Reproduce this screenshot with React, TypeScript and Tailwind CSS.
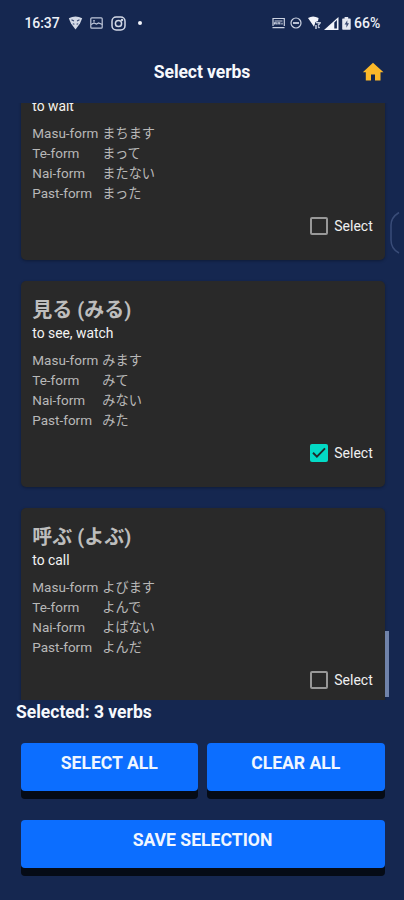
import React, { useState } from "react";

type Verb = {
  title?: string;
  meaning: string;
  forms: [string, string, string, string];
  selected: boolean;
};

const verbs: Verb[] = [
  { meaning: "to wait", forms: ["まちます", "まって", "またない", "まった"], selected: false },
  { title: "見る (みる)", meaning: "to see, watch", forms: ["みます", "みて", "みない", "みた"], selected: true },
  { title: "呼ぶ (よぶ)", meaning: "to call", forms: ["よびます", "よんで", "よばない", "よんだ"], selected: false },
];

const formNames = ["Masu-form", "Te-form", "Nai-form", "Past-form"];

function StatusBar() {
  return (
    <div className="flex h-[46px] items-center pl-[24.5px] pr-[23px] text-[14px] font-medium text-[#eef1f8]">
      <span className="w-[35px] whitespace-nowrap tracking-[-0.1px]">16:37</span>
      <svg className="ml-[8px]" width="15" height="14" viewBox="0 0 15 14">
        <path d="M0.8 2.2Q7.5-1 14.2 2.2L12 7.5 7.5 13.4 3 7.5Z" fill="#d3d9e6" />
        <path d="M3.5 3.8l2.5 1.3M11.5 3.8L9 5.1M4.8 7.8l1.6.4M10.2 7.8l-1.6.4" stroke="#34466f" strokeWidth="1.1" />
      </svg>
      <svg className="ml-[7px]" width="13" height="12" viewBox="0 0 13 12" fill="none" stroke="#bfc7d9" strokeWidth="1.2">
        <rect x="0.8" y="0.8" width="11.4" height="10.4" rx="1" />
        <path d="M1 7.5l3-1.5 2.5 1 2-1 4 1.5M3 3.8h2" />
      </svg>
      <svg className="ml-[8px]" width="15" height="15" viewBox="0 0 15 15" fill="none" stroke="#d3d9e6" strokeWidth="1.5">
        <rect x="1" y="1" width="13" height="13" rx="4.2" />
        <circle cx="7.5" cy="7.5" r="3.1" />
        <circle cx="11" cy="4" r="0.5" />
      </svg>
      <span className="ml-[12px] size-1 rounded-full bg-[#f2f4fa]" />
      <div className="ml-auto flex items-center">
        <svg width="13" height="12" viewBox="0 0 13 12" fill="none" stroke="#cbd2e1" strokeWidth="1.2">
          <path d="M1 9V1.5h11.3V9M0.5 10.7h12" />
          <path d="M2.5 4h8M2.5 7.6V5.8h1.7v1.8M6 7.6V5.8h1.8v1.8M10 5.8v1.8" />
        </svg>
        <svg className="ml-[5px]" width="12" height="12" viewBox="0 0 12 12" fill="none" stroke="#cbd2e1" strokeWidth="1.2">
          <circle cx="6" cy="6" r="5" />
          <path d="M3 6h6" strokeWidth="1.8" />
        </svg>
        <svg className="ml-[6px]" width="13" height="14" viewBox="0 0 13 14">
          <path d="M0 2Q5-1 10.6 2L10 5 7.5 6 6 10.8Z" fill="#f2f4fa" />
          <path d="M8 6.5l4 .5-2 2.5M8 9v4M10 10.5l1.5 1.5" stroke="#cbd2e1" strokeWidth="1.5" fill="none" />
        </svg>
        <svg className="ml-[3px]" width="15" height="13" viewBox="0 0 15 13">
          <path d="M0 13L14.5 0v13Z" fill="#f2f4fa" />
          <path d="M10.3 5.4L12.9 3v8.5h-2.6Z" fill="#152750" />
        </svg>
        <svg className="ml-[3px]" width="9" height="13" viewBox="0 0 9 13">
          <path d="M2.6 0h3.6v1.4H8a.7.7 0 01.7.7v10a.7.7 0 01-.7.7H.9a.7.7 0 01-.7-.7v-10a.7.7 0 01.7-.7h1.7Z" fill="#e3e7f0" />
          <path d="M5.3 3.2L2.6 7.4h1.8v3.3l2.6-4.4H5.3Z" fill="#3b4b73" />
        </svg>
        <span className="ml-[3px] w-[27px] whitespace-nowrap">66%</span>
      </div>
    </div>
  );
}

function Header() {
  return (
    <header className="grid h-[57px] grid-cols-[1fr_auto_1fr] items-start px-[19px] pt-[14px] text-[#f7f9fd]">
      <span />
      <h1 className="text-[17.6px] font-bold leading-6 tracking-[-0.1px]">Select verbs</h1>
      <svg className="justify-self-end" width="24" height="24" viewBox="0 0 24 24" fill="#fbb829">
        <path d="M10 20.5v-6h4v6h5.5v-8.3h3L12 2.8 1.8 12.2h3v8.3z" />
      </svg>
    </header>
  );
}

function VerbCard({ verb, checked, onToggle }: { verb: Verb; checked: boolean; onToggle: () => void }) {
  return (
    <article className="h-[206px] shrink-0 rounded-[5px] bg-[#292929] pl-[11.6px] pr-[11.4px] pt-[16px] shadow-[0_1px_3px_rgba(0,0,0,0.3)]">
      <h2 className="h-[26px] whitespace-nowrap text-[20px] font-bold leading-[27px] text-[#bdbdbd]">{verb.title}</h2>
      <p className="h-5 text-[13.85px] leading-5 text-[#f3f3f3]">{verb.meaning}</p>
      <dl className="mt-[7px] grid grid-cols-[70px_1fr] text-[13.5px] leading-5 text-[#b8b8b8]">
        {formNames.map((name, i) => (
          <React.Fragment key={name}>
            <dt className="h-5 whitespace-nowrap">{name}</dt>
            <dd className="h-5 whitespace-nowrap text-[13.2px] leading-[22px]">{verb.forms[i]}</dd>
          </React.Fragment>
        ))}
      </dl>
      <div className="mt-[13px] flex h-5 items-center justify-end">
        <button
          onClick={onToggle}
          aria-label="Select"
          className={
            checked
              ? "flex size-[18px] items-center justify-center rounded-[2px] bg-[#03dac5]"
              : "size-[18px] rounded-[2px] border-2 border-[#989898]"
          }
        >
          {checked && (
            <svg width="14" height="12" viewBox="0 0 14 12" fill="none" stroke="#202a29" strokeWidth="1.9">
              <path d="M1 5.8l3.9 3.8L13 1.4" />
            </svg>
          )}
        </button>
        <span className="ml-[6px] w-[39px] whitespace-nowrap text-[14px] text-[#f0f0f0]">Select</span>
      </div>
    </article>
  );
}

function ActionButton({ label, onClick }: { label: string; onClick?: () => void }) {
  return (
    <button
      onClick={onClick}
      className="flex h-12 w-full items-start justify-center rounded-[4px] bg-[#0c6eff] pt-2 text-[17.6px] font-bold leading-6 text-[#f0f6ff] shadow-[0_8px_0_#050b16]"
    >
      {label}
    </button>
  );
}

export default function App() {
  const [checks, setChecks] = useState(verbs.map((v) => v.selected));
  return (
    <div className="relative flex h-[900px] w-[404px] flex-col overflow-hidden bg-[#152750] font-[Roboto,'Noto_Sans_CJK_JP',sans-serif]">
      <StatusBar />
      <Header />
      <main className="flex h-[597px] overflow-hidden">
        <div className="ml-[20.7px] mt-[-49px] flex w-[364px] flex-col gap-[21px]">
          {verbs.map((verb, i) => (
            <VerbCard
              key={verb.meaning}
              verb={verb}
              checked={checks[i]}
              onToggle={() => setChecks(checks.map((c, j) => (j === i ? !c : c)))}
            />
          ))}
        </div>
        <div className="mt-[528px] h-[66px] w-1 bg-[#7083aa]" />
      </main>
      <p className="ml-4 h-[43px] text-[17.5px] font-bold leading-[25px] text-[#f7f9fd]">Selected: 3 verbs</p>
      <div className="ml-[20.5px] grid w-[364px] grid-cols-2 gap-x-[9px] gap-y-[29px]">
        <ActionButton label="SELECT ALL" onClick={() => setChecks(checks.map(() => true))} />
        <ActionButton label="CLEAR ALL" onClick={() => setChecks(checks.map(() => false))} />
        <div className="col-span-2">
          <ActionButton label="SAVE SELECTION" />
        </div>
      </div>
      <svg className="absolute left-[390px] top-[211px]" width="14" height="44" viewBox="0 0 14 44" fill="none" stroke="#394c78" strokeWidth="1.5">
        <path d="M9 1.5Q1 6.5 1 14v15q0 9 8 13" />
      </svg>
    </div>
  );
}
